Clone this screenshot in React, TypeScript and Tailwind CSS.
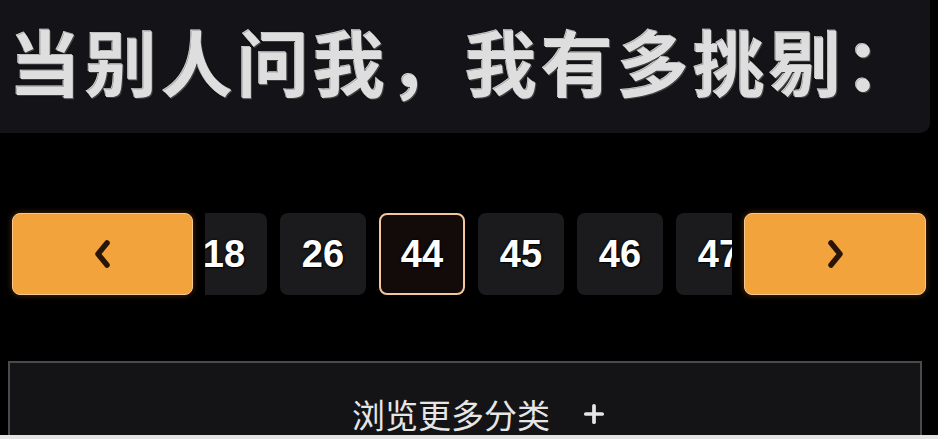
import { Plus } from 'lucide-react';

const pages = ['18', '26', '44', '45', '46', '47'];

function Chevron({ dir }: { dir: 'left' | 'right' }) {
  return (
    <svg width="22" height="32" viewBox="0 0 22 32" fill="none">
      <polyline
        points={dir === 'left' ? '15,5 6,16 15,27' : '7,5 16,16 7,27'}
        stroke="#2a1608"
        strokeWidth="5.5"
        strokeLinecap="round"
        strokeLinejoin="round"
      />
    </svg>
  );
}

export default function App() {
  return (
    <div
      className="w-[938px] h-[439px] bg-black overflow-hidden flex flex-col"
      style={{ fontFamily: '"Liberation Sans", "Noto Sans CJK SC", sans-serif' }}
    >
      <header className="h-[133px] mr-[8px] shrink-0 bg-[#141317] rounded-br-[10px] flex items-center pl-[9px] pb-[14px]">
        <h1
          className="text-[72px] leading-none font-bold tracking-[4px] text-[#dedede] whitespace-nowrap [text-shadow:0_0_2px_#000,1px_1px_0_#555,-1px_-1px_0_#fff]"
          style={{ fontFamily: '"Noto Sans CJK SC", sans-serif' }}
        >
          当别人问我，我有多挑剔：
        </h1>
      </header>

      <nav className="mt-[80px] h-[82px] shrink-0 flex gap-[12px] px-[12px]">
        <button className="w-[181px] h-full shrink-0 rounded-[8px] bg-[#f2a33b] border border-[#f7c98f] shadow-[0_0_6px_rgba(242,130,40,0.35)] flex items-center justify-center">
          <Chevron dir="left" />
        </button>

        <div className="flex-1 overflow-hidden">
          <div className="flex gap-[13px] ml-[-24px] h-full">
            {pages.map((p) => (
              <div
                key={p}
                className={
                  p === '44'
                    ? 'w-[86px] h-full shrink-0 rounded-[8px] bg-[#120b09] border-2 border-[#f3c79c] flex items-center justify-center'
                    : 'w-[86px] h-full shrink-0 rounded-[8px] bg-[#1b1b1d] flex items-center justify-center'
                }
              >
                <span className="text-[38px] font-bold text-white leading-none [text-shadow:0_0_3px_#000,1px_1px_1px_#000]">
                  {p}
                </span>
              </div>
            ))}
          </div>
        </div>

        <button className="w-[182px] h-full shrink-0 rounded-[8px] bg-[#f2a33b] border border-[#f7c98f] shadow-[0_0_6px_rgba(242,130,40,0.35)] flex items-center justify-center">
          <Chevron dir="right" />
        </button>
      </nav>

      <div className="mt-[66px] ml-[8px] mr-[16px] flex-1 bg-[#141416] border-t-2 border-l-2 border-r-2 border-[#4a4a4c] flex items-end justify-center pb-[4px] pl-[30px]">
        <span
          className="text-[33px] text-[#e6e6e6] leading-none"
          style={{ fontFamily: '"Noto Sans CJK SC", sans-serif' }}
        >
          浏览更多分类
        </span>
        <Plus className="ml-[30px] mb-[3px] w-[28px] h-[28px] text-[#e6e6e6]" strokeWidth={3.2} />
      </div>
      <div className="h-[4px] shrink-0 bg-[#e4e4e4]" />
    </div>
  );
}
